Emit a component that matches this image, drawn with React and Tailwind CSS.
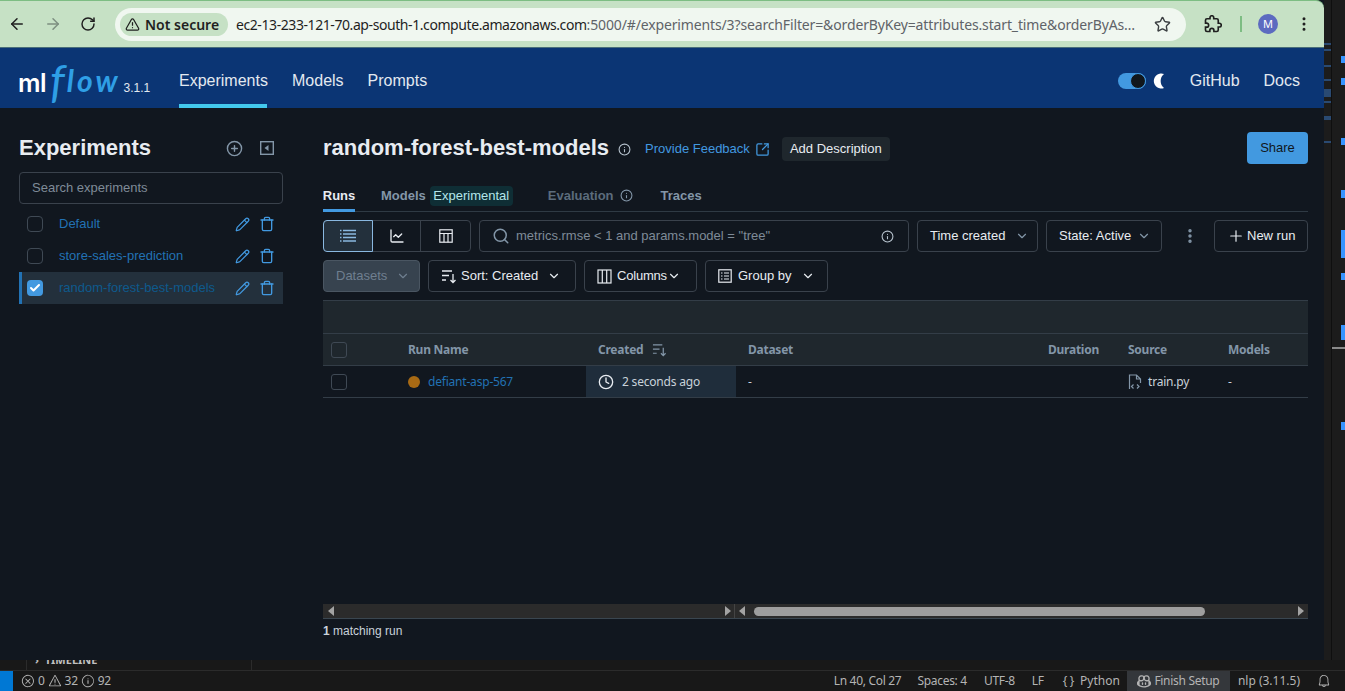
import {
  ArrowLeft,
  ArrowRight,
  RotateCw,
  TriangleAlert,
  Star,
  EllipsisVertical,
  CirclePlus,
  Pencil,
  Trash,
  Info,
  SquareArrowOutUpRight,
  ChartLine,
  Search,
  ChevronDown,
  Plus,
  Clock,
  Check,
} from "lucide-react";
import { VscCopilot, VscBell, VscError, VscWarning, VscInfo } from "react-icons/vsc";

const ARIAL = "font-['Liberation_Sans',Arial,sans-serif]";
const TABLE = "font-['Noto_Sans',sans-serif]";

const EXPERIMENTS = [
  { name: "Default" },
  { name: "store-sales-prediction" },
  { name: "random-forest-best-models", selected: true },
];

const GRID = "grid grid-cols-[73px_190px_150px_300px_80px_100px_92px]";

const MINIMAP_LEFT = [
  [43, 2], [49, 2], [65, 2], [79, 2], [89, 8], [101, 2], [116, 4], [141, 2],
];
const MINIMAP_RIGHT = [
  [56, 7], [78, 7], [138, 7], [190, 8], [230, 28], [273, 7], [325, 15], [422, 8],
];

const SortIcon = ({ size = 16 }) => (
  <svg width={size} height={size} viewBox="0 0 16 16" fill="none" stroke="currentColor" strokeWidth="1.3">
    <path d="M1 3h10M1 7.5h7M1 12h4M12 6v8.5M9.5 12l2.5 2.5 2.5-2.5" />
  </svg>
);

const ColumnsIcon = () => (
  <svg width="15" height="15" viewBox="0 0 15 15" fill="none" stroke="currentColor" strokeWidth="1.2">
    <rect x="1" y="1" width="13" height="13" />
    <path d="M5.3 1v13M9.7 1v13" />
  </svg>
);

const GroupIcon = () => (
  <svg width="14" height="14" viewBox="0 0 14 14" fill="none" stroke="currentColor" strokeWidth="1.2">
    <rect x="0.8" y="0.8" width="12.4" height="12.4" />
    <path d="M3 4h1.5M6 4h5M3 7h1.5M6 7h5M3 10h1.5M6 10h5" />
  </svg>
);

const ListIcon = () => (
  <svg width="16" height="14" viewBox="0 0 16 14" fill="none" stroke="currentColor" strokeWidth="1.3">
    <path d="M0 1.5h1.5M3 1.5h13M0 5h1.5M3 5h13M0 8.5h1.5M3 8.5h13M0 12h1.5M3 12h13" />
  </svg>
);

const TableIcon = () => (
  <svg width="14" height="14" viewBox="0 0 14 14" fill="none" stroke="currentColor" strokeWidth="1.2">
    <rect x="0.8" y="0.8" width="12.4" height="12.4" />
    <path d="M0.8 4.5h12.4M5 4.5v8.7M9 4.5v8.7" />
  </svg>
);

const CollapseIcon = () => (
  <svg width="14" height="14" viewBox="0 0 14 14" fill="none">
    <rect x="0.7" y="0.7" width="12.6" height="12.6" stroke="#8396a8" strokeWidth="1.4" />
    <path d="M8.5 4v6L4.5 7z" fill="#8396a8" />
  </svg>
);

const FileCodeIcon = () => (
  <svg width="14" height="16" viewBox="0 0 14 16" fill="none" stroke="#8396a8" strokeWidth="1.2">
    <path d="M1.5 15V1h7l4 4v4M8.5 1v4h4" />
    <path d="M5.5 10.5l-2 2 2 2M9 10.5l2 2-2 2" />
  </svg>
);

const ExtensionIcon = () => (
  <svg width="18" height="18" viewBox="0 0 24 24" fill="none" stroke="#1f1f1f" strokeWidth="2.2">
    <path d="M20.5 11H19V7c0-1.1-.9-2-2-2h-4V3.5C13 2.12 11.88 1 10.5 1S8 2.12 8 3.5V5H4c-1.1 0-1.99.9-1.99 2v3.8H3.5c1.49 0 2.7 1.21 2.7 2.7s-1.21 2.7-2.7 2.7H2V20c0 1.1.9 2 2 2h3.8v-1.5c0-1.49 1.21-2.7 2.7-2.7 1.49 0 2.7 1.21 2.7 2.7V22H17c1.1 0 2-.9 2-2v-4h1.5c1.38 0 2.5-1.12 2.5-2.5S21.88 11 20.5 11z" />
  </svg>
);

const MoonIcon = () => (
  <svg width="14" height="16" viewBox="0 0 14 16" className="ml-[7px]">
    <path d="M11 1A7.5 7.5 0 1 0 11 15 9 9 0 0 1 11 1z" fill="#fff" />
  </svg>
);

const Arrow = ({ dir }) => (
  <span
    className={
      dir === "left"
        ? "block h-0 w-0 border-y-[5px] border-y-transparent border-r-[6px] border-r-[#a3a3a3]"
        : "block h-0 w-0 border-y-[5px] border-y-transparent border-l-[6px] border-l-[#a3a3a3]"
    }
  />
);

const OutlineButton = ({ className, children }) => (
  <div
    className={`flex h-8 items-center rounded border border-[#3a424c] text-[13px] text-[#e8ecf1] ${className}`}
  >
    {children}
  </div>
);

const BrowserBar = () => (
  <div className="h-[48px] shrink-0 rounded-tr-lg border-t border-t-[#7dbd83] bg-[#c6e1c5] border-b border-b-[#4a6f7a]">
    <div className="flex h-[46px] items-center font-['Noto_Sans',sans-serif]">
      <div className="flex w-[115px] shrink-0 items-center pl-[8px] gap-[18px]">
        <ArrowLeft size={18} className="text-[#1f1f1f]" />
        <ArrowRight size={18} className="text-[#7d8f80]" />
        <RotateCw size={16} strokeWidth={2.2} className="text-[#1f1f1f]" />
      </div>
      <div className="flex h-[33px] w-[1071px] items-center rounded-full bg-[#f0f7f0] pl-[5px] pr-[15px]">
        <div className="flex h-[23px] w-[108px] items-center gap-[5px] rounded-full bg-[#c6e1c5] pl-[5px] text-[14px] font-semibold text-[#1f1f1f]">
          <TriangleAlert size={15} />
          Not secure
        </div>
        <div className="ml-2 w-[907px] truncate text-[14px] tracking-[-0.14px] text-[#5f6368]">
          <span className="tracking-[-0.42px] text-[#1f1f1f]">ec2-13-233-121-70.ap-south-1.compute.amazonaws.com</span>
          :5000/#/experiments/3?searchFilter=&orderByKey=attributes.start_time&orderByAs…
        </div>
        <Star size={17} className="ml-auto text-[#3c4043]" />
      </div>
      <div className="ml-[18px] flex items-center">
        <ExtensionIcon />
        <span className="ml-[18px] h-4 w-[2px] bg-[#7dbd83]" />
        <span className="ml-[16px] flex h-5 w-5 items-center justify-center rounded-full bg-[#5c6bc0] text-[11px] text-white">
          M
        </span>
        <EllipsisVertical size={18} className="ml-[17px] text-[#1f1f1f]" />
      </div>
    </div>
  </div>
);

const TopNav = () => (
  <div className={`flex h-[60px] shrink-0 items-center bg-[#0b3574] pt-[5px] text-[16px] text-[#e3e9f0] ${ARIAL}`}>
    <div className="flex w-[179px] shrink-0 items-baseline pl-[18px]">
      <span className="font-['Inter',sans-serif] text-[25px] font-semibold tracking-[-0.5px] text-white">
        ml
      </span>
      <span className="ml-[4px] inline-block translate-y-[6px] font-['Lato',sans-serif] text-[46px] italic leading-[32px] text-[#2f9fe6]">
        f
      </span>
      <span className="ml-[2px] font-['Lato',sans-serif] text-[30px] font-bold italic leading-[32px] tracking-[3px] text-[#2f9fe6]">
        low
      </span>
      <span className="ml-[3px] text-[12px] leading-[14px]">3.1.1</span>
    </div>
    <div className="-mt-[5px] flex h-[60px] w-[88px] flex-col justify-between">
      <span className="mt-[24px] leading-[18px]">Experiments</span>
      <span className="h-1 bg-[#43c9ed]" />
    </div>
    <span className="ml-[25px]">Models</span>
    <span className="ml-[24px]">Prompts</span>
    <div className="ml-auto flex items-center pr-6">
      <div className="flex h-4 w-7 justify-end rounded-full bg-[#4299e0]">
        <span className="h-4 w-4 rounded-full border border-[#4299e0] bg-[#11171c]" />
      </div>
      <MoonIcon />
      <span className="ml-[23px]">GitHub</span>
      <span className="ml-[24px]">Docs</span>
    </div>
  </div>
);

const Sidebar = () => (
  <div className={`w-[323px] shrink-0 pl-[19px] pt-[25px] ${ARIAL}`}>
    <div className="flex h-[30px] w-[264px] items-center">
      <h2 className="text-[22px] font-bold leading-[30px] text-[#e8ecf1]">Experiments</h2>
      <CirclePlus size={17} className="ml-auto text-[#8396a8]" />
      <span className="ml-[17px] mr-[9px]">
        <CollapseIcon />
      </span>
    </div>
    <div className="mt-[9px] flex h-8 w-[264px] items-center rounded border border-[#3a424c] pl-3 text-[13px] text-[#7f8b98]">
      Search experiments
    </div>
    <div className="mt-1 w-[264px]">
      {EXPERIMENTS.map((exp) => (
        <div
          key={exp.name}
          className={`flex h-8 items-center ${
            exp.selected ? "border-l-[3px] border-l-[#2272b4] bg-[#23303c] pl-[5px]" : "pl-2"
          }`}
        >
          {exp.selected ? (
            <span className="flex h-4 w-4 items-center justify-center rounded bg-[#4299e0]">
              <Check size={12} strokeWidth={4} className="text-white" />
            </span>
          ) : (
            <span className="h-4 w-4 rounded border border-[#3f4954]" />
          )}
          <span
            className={`ml-4 text-[13px] ${exp.selected ? "text-[#0e5a8d]" : "text-[#2272b4]"}`}
          >
            {exp.name}
          </span>
          <span className="ml-auto flex items-center gap-[9px] pr-[8px] text-[#4299e0]">
            <Pencil size={15} />
            <Trash size={16} />
          </span>
        </div>
      ))}
    </div>
  </div>
);

const Header = () => (
  <>
    <div className="flex h-8 items-center">
      <h1 className="-mt-[2px] text-[22px] font-bold text-[#e8ecf1]">random-forest-best-models</h1>
      <Info size={13} className="ml-[9px] mt-[2px] text-[#b6c2cd]" />
      <span className="ml-[14px] mt-[2px] text-[13px] text-[#4299e0]">Provide Feedback</span>
      <SquareArrowOutUpRight size={15} className="ml-[5px] mt-[2px] text-[#4299e0]" />
      <span className="ml-[12px] mt-[2px] flex h-6 w-[108px] items-center justify-center rounded bg-[#1f272d] text-[13px] text-[#e8ecf1]">
        Add Description
      </span>
      <span className="ml-auto flex h-8 w-[61px] items-center justify-center rounded bg-[#4299e0] text-[13px] text-[#11171c]">
        Share
      </span>
    </div>
    <div className="mt-[16px] flex h-[32px] items-stretch border-b border-b-[#2f3a44] text-[13px] font-bold">
      <span className="-mb-px flex w-[32px] items-center justify-center border-b-[3px] border-b-[#4299e0] pt-[2px] text-[#e8ecf1]">
        Runs
      </span>
      <span className="ml-[26px] flex items-center text-[#8396a8]">Models</span>
      <span className="ml-[4px] mt-[6px] flex h-5 w-[83px] items-center justify-center rounded bg-[#0f2e35] text-[13px] font-normal text-[#b3e6ea]">
        Experimental
      </span>
      <span className="ml-[35px] flex items-center text-[#5c6c7c]">Evaluation</span>
      <span className="ml-[6px] flex items-center text-[#8396a8]">
        <Info size={13} />
      </span>
      <span className="ml-[28px] flex items-center text-[#8396a8]">Traces</span>
    </div>
  </>
);

const Toolbar = () => (
  <>
    <div className="mt-2 flex items-center">
      <div className="flex h-8 w-[148px] rounded border border-[#3a424c] text-[#e8ecf1]">
        <span className="-m-px flex w-[50px] items-center justify-center rounded-l border border-[#8ab8e0] bg-[#23303c] text-[#8ab8e0]">
          <ListIcon />
        </span>
        <span className="flex w-[49px] items-center justify-center border-r border-r-[#3a424c] pl-[2px]">
          <ChartLine size={16} />
        </span>
        <span className="flex flex-1 items-center justify-center">
          <TableIcon />
        </span>
      </div>
      <OutlineButton className="ml-2 w-[430px] pl-3 pr-[14px]">
        <Search size={18} className="text-[#8396a8]" />
        <span className="ml-[6px] text-[#7f8b98]">metrics.rmse &lt; 1 and params.model = "tree"</span>
        <Info size={13} className="ml-auto text-[#b6c2cd]" />
      </OutlineButton>
      <OutlineButton className="ml-2 w-[121px] pl-3">
        Time created
        <ChevronDown size={14} className="ml-[10px] text-[#8396a8]" />
      </OutlineButton>
      <OutlineButton className="ml-2 w-[116px] pl-3">
        State: Active
        <ChevronDown size={14} className="ml-[6px] text-[#8396a8]" />
      </OutlineButton>
      <EllipsisVertical size={18} strokeWidth={2.6} className="ml-[19px] text-[#8396a8]" />
      <OutlineButton className="ml-[15px] w-[94px] pl-[12px]">
        <Plus size={18} strokeWidth={1.6} />
        <span className="ml-[2px]">New run</span>
      </OutlineButton>
    </div>
    <div className="mt-2 flex items-center">
      <div className="flex h-8 w-[97px] items-center rounded border border-[#4a5662] bg-[#37434f] pl-3 text-[13px] text-[#6f7f8f]">
        Datasets
        <ChevronDown size={14} className="ml-[9px]" />
      </div>
      <OutlineButton className="ml-2 w-[148px] pl-3">
        <SortIcon />
        <span className="ml-[4px]">Sort: Created</span>
        <ChevronDown size={14} className="ml-[9px]" />
      </OutlineButton>
      <OutlineButton className="ml-2 w-[113px] pl-3">
        <ColumnsIcon />
        <span className="ml-[5px] tracking-[-0.2px]">Columns</span>
        <ChevronDown size={14} />
      </OutlineButton>
      <OutlineButton className="ml-2 w-[123px] pl-3">
        <GroupIcon />
        <span className="ml-[6px]">Group by</span>
        <ChevronDown size={14} className="ml-[10px]" />
      </OutlineButton>
    </div>
  </>
);

const RunsTable = () => (
  <div className={`mt-2 ${TABLE} text-[12px]`}>
    <div className="h-[34px] border-y border-y-[#333d47] bg-[#1f272d]" />
    <div className={`${GRID} h-[32px] items-center border-b border-b-[#333d47] bg-[#1f272d] font-bold tracking-[-0.25px] text-[#8396a8]`}>
      <span className="pl-2">
        <span className="block h-4 w-4 rounded-[3px] border border-[#3f4954]" />
      </span>
      <span className="px-3">Run Name</span>
      <span className="flex items-center gap-[9px] px-3">
        Created
        <SortIcon size={15} />
      </span>
      <span className="px-3">Dataset</span>
      <span className="px-3">Duration</span>
      <span className="px-3">Source</span>
      <span className="px-3">Models</span>
    </div>
    <div className={`${GRID} h-[32px] items-stretch border-b border-b-[#333d47] tracking-[-0.2px] text-[#c9d2da]`}>
      <span className="flex items-center pl-2">
        <span className="block h-4 w-4 rounded-[3px] border border-[#3f4954]" />
      </span>
      <span className="flex items-center px-3">
        <span className="h-3 w-3 rounded-full bg-[#a86a14]" />
        <span className="ml-2 text-[#2272b4]">defiant-asp-567</span>
      </span>
      <span className="flex items-center bg-[#1f2d3b] px-3">
        <Clock size={16} className="text-[#e8ecf1]" />
        <span className="ml-2">2 seconds ago</span>
      </span>
      <span className="flex items-center px-3">-</span>
      <span />
      <span className="flex items-center px-3">
        <FileCodeIcon />
        <span className="ml-[6px]">train.py</span>
      </span>
      <span className="flex items-center px-3">-</span>
    </div>
  </div>
);

const ScrollBars = () => (
  <div className="mt-auto flex h-[15px] border-b border-b-[#3a4650] bg-[#2b2b2b]">
    <div className="flex w-[412px] items-center justify-between border-r border-r-[#444] pl-[5px] pr-[3px]">
      <Arrow dir="left" />
      <Arrow dir="right" />
    </div>
    <div className="flex flex-1 items-center pl-[4px] pr-[4px]">
      <Arrow dir="left" />
      <span className="ml-[9px] h-[9px] w-[451px] rounded-full bg-[#9e9e9e]" />
      <span className="ml-auto">
        <Arrow dir="right" />
      </span>
    </div>
  </div>
);

const StatusBar = () => (
  <div className="flex h-[21px] shrink-0 items-center border-t border-t-[#2b2b2b] bg-[#181818] font-['Noto_Sans',sans-serif] text-[12px] tracking-[-0.3px] text-[#b4b4b4]">
    <span className="h-full w-[13px] bg-[#0078d4]" />
    <span className="ml-[8px] flex items-center gap-[3px]">
      <VscError size={14} /> 0
      <VscWarning size={14} /> 32
      <VscInfo size={14} /> 92
    </span>
    <span className="ml-auto flex h-full items-center pr-[14px]">
      <span>Ln 40, Col 27</span>
      <span className="ml-[16px]">Spaces: 4</span>
      <span className="ml-[17px]">UTF-8</span>
      <span className="ml-[17px]">LF</span>
      <span className="ml-[19px]">{"{ }"}</span>
      <span className="ml-[6px] tracking-normal">Python</span>
      <span className="ml-[7px] flex h-full w-[103px] items-center justify-center gap-[3px] bg-[#34373b]">
        <VscCopilot size={14} />
        Finish Setup
      </span>
      <span className="ml-[8px] tracking-normal">nlp (3.11.5)</span>
      <VscBell size={14} className="ml-[17px]" />
    </span>
  </div>
);

const App = () => {
  return (
    <div className="flex h-[691px] w-[1345px] flex-col overflow-hidden bg-[#1c1c1c]">
      <div className="flex h-[660px] shrink-0">
        <div className="flex w-[1324px] shrink-0 flex-col bg-[#11171f]">
          <BrowserBar />
          <TopNav />
          <div className="flex min-h-0 flex-1">
            <Sidebar />
            <div className={`flex w-[985px] shrink-0 flex-col pb-[22px] pt-6 ${ARIAL}`}>
              <Header />
              <Toolbar />
              <RunsTable />
              <ScrollBars />
              <div className="mt-[5px] text-[12px] leading-[14px] text-[#c9d2da]">
                <b>1</b> matching run
              </div>
            </div>
          </div>
        </div>
        {/* minimap strip of the editor behind the browser */}
        <div className="relative flex-1">
          <div className="absolute inset-y-0 left-[7px] w-px bg-[#0f0f0f]" />
          {MINIMAP_LEFT.map(([top, h]) => (
            <span
              key={top}
              className="absolute left-0 w-[7px] bg-[#2a4a72]"
              style={{ top, height: h }}
            />
          ))}
          {MINIMAP_RIGHT.map(([top, h]) => (
            <span
              key={top}
              className="absolute right-0 w-1 bg-[#3794ff]"
              style={{ top, height: h }}
            />
          ))}
          <span className="absolute left-[8px] right-0 top-[347px] h-[2px] bg-[#8a8a8a]" />
        </div>
      </div>
      <div className="flex h-[10px] shrink-0 overflow-hidden bg-[#181818]">
        <div className="ml-[26px] h-full w-[226px] border-x border-x-[#2b2b2b] pl-[8px] font-['Noto_Sans',sans-serif] text-[11px] font-bold leading-[10px] text-[#c0c0c0]">
          <span className="-mt-[5px] block">› &nbsp;TIMELINE</span>
        </div>
      </div>
      <StatusBar />
    </div>
  );
};

export default App;
